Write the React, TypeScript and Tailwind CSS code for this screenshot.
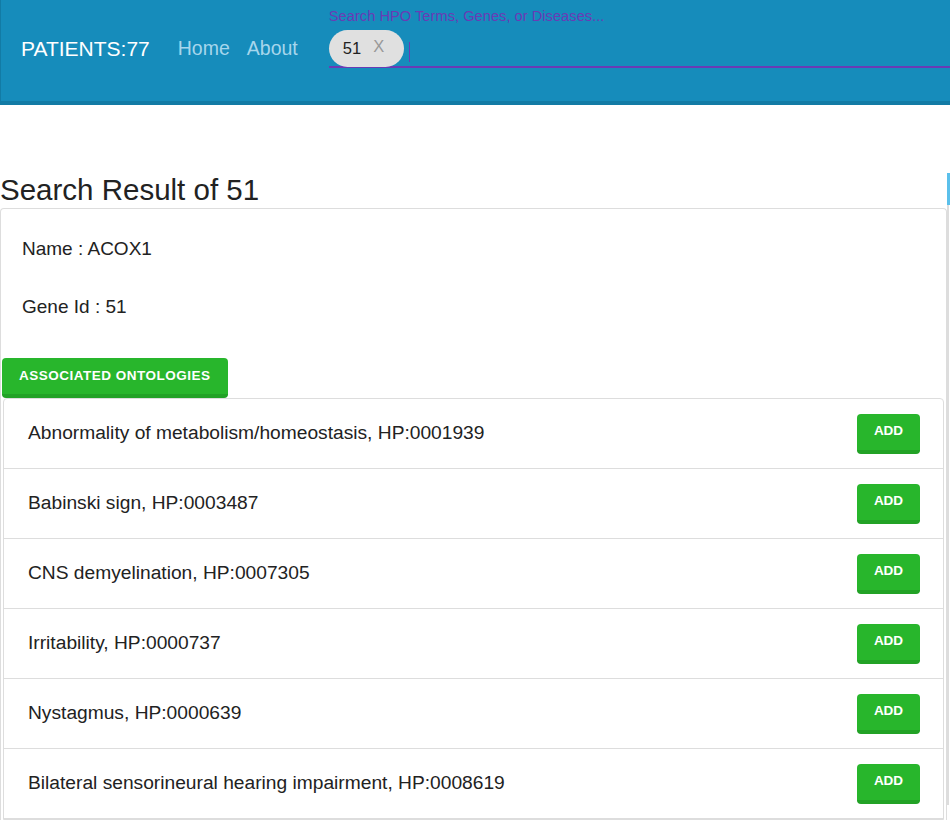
const ontologies = [
  'Abnormality of metabolism/homeostasis, HP:0001939',
  'Babinski sign, HP:0003487',
  'CNS demyelination, HP:0007305',
  'Irritability, HP:0000737',
  'Nystagmus, HP:0000639',
  'Bilateral sensorineural hearing impairment, HP:0008619',
]

export default function App() {
  return (
    <div className="h-[824px] overflow-hidden bg-white font-['Liberation_Sans',Arial,sans-serif] text-[#222]">
      {/* Navbar */}
      <nav className="flex h-[105px] items-start border-b-4 border-l border-[#127ba5] bg-[#168cbb]">
        <div className="flex h-[97px] items-center pl-5">
          <span className="text-[21px] text-white">PATIENTS:77</span>
          <a className="ml-[28px] text-[19.5px] text-[#a6d6ec]">Home</a>
          <a className="ml-[17px] text-[19.5px] text-[#a6d6ec]">About</a>
        </div>
        <div className="ml-[31px] flex-1 pt-[8px]">
          <div className="text-[14.7px] leading-[16px] text-[#6a3bb5]">Search HPO Terms, Genes, or Diseases...</div>
          <div className="mt-[7px] flex h-[37px] items-center border-b-2 border-[#6a3bb5]">
            <div className="flex h-[37px] items-center rounded-full bg-[#e0e0e0] pl-[14px] pr-[20px]">
              <span className="text-[16.5px] text-[#222]">51</span>
              <span className="ml-[12px] -mt-[4px] text-[16.5px] text-[#999]">X</span>
            </div>
            <span className="ml-[5px] mt-[6px] h-[20px] w-px bg-[#6a3bb5]" />
          </div>
        </div>
      </nav>

      {/* Main */}
      <div className="flex pt-[66px]">
        <div className="w-[947px]">
          <h2 className="h-[37px] text-[29.5px] leading-[37px]">Search Result of 51</h2>
          <div className="rounded-t border border-b-0 border-[#dddddd] pl-px pr-[2px] pt-px">
            <div className="px-[20px] pt-[26px] text-[19px] leading-[26px]">
              <p>Name : ACOX1</p>
              <p className="mt-[32px]">Gene Id : 51</p>
            </div>
            <button className="mt-[38px] h-[40px] rounded border-b-[4px] border-[#22a226] bg-[#28b62c] px-[17px] text-[13.5px] font-bold uppercase tracking-[0.5px] text-white">
              Associated Ontologies
            </button>
            <ul className="ml-px rounded-t border border-[#dddddd]">
              {ontologies.map((o) => (
                <li key={o} className="flex h-[70px] items-center justify-between border-b border-[#dddddd] pl-[24px] pr-[23px]">
                  <span className="text-[19.2px]">{o}</span>
                  <button className="h-[40px] w-[63px] rounded border-b-[4px] border-[#22a226] bg-[#28b62c] text-[13.5px] font-bold text-white">
                    ADD
                  </button>
                </li>
              ))}
            </ul>
          </div>
        </div>
        <div className="flex w-[3px] flex-col">
          <div className="mt-[2px] h-[32px] w-[3px] bg-[#5bc0eb]" />
          <div className="h-[600px] w-[2px] bg-[#dddddd]" />
        </div>
      </div>
    </div>
  )
}
